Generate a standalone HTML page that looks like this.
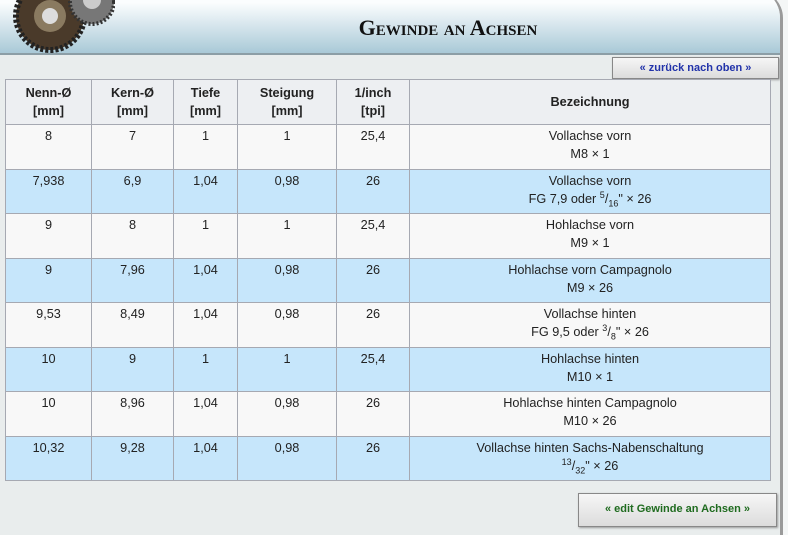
<!DOCTYPE html>
<html><head><meta charset="utf-8"><style>
*{margin:0;padding:0;box-sizing:border-box}
body{width:788px;height:526px;overflow:hidden;background:#f4f6f6;font-family:"Liberation Sans",Arial,sans-serif;font-size:12.7px;color:#222;position:relative}
#panel{position:absolute;left:-4px;top:-10px;width:787px;height:545px;background:#e9eded;border-right:3px solid #9a9a9a;border-top-right-radius:28px;overflow:hidden}
#hdr{position:absolute;left:0;top:0;width:100%;height:65px;background:linear-gradient(#fbfdfe 20%,#a9c9d7);border-bottom:2px solid #8c9ea6}
#title{position:absolute;left:0;width:100%;top:25px;text-align:center;font-family:"Liberation Serif",serif;font-size:22px;font-variant:small-caps;font-weight:bold;color:#111;padding-left:120px}
.btn{position:absolute;background:linear-gradient(#f6f6f6,#dcdcdc);border:1px solid #888;font-weight:bold;font-size:11px;text-align:center;box-shadow:1px 1px 2px #999}
table{position:absolute;left:5px;top:79px;border-collapse:collapse;width:766px}
td,th{border:1px solid #a6a9b2;text-align:center;vertical-align:top;padding-top:2px;line-height:18px}
th{background:#edeff2;font-weight:bold;height:45px;vertical-align:middle;padding-top:0}
tr.w td{background:#f8f8f8}
tr.b td{background:#c6e6fb}
td{height:44.5px}
sup,sub{font-size:9px;line-height:0}
</style></head><body>
<div id="panel">
<div id="hdr">
<svg width="115" height="62" style="position:absolute;left:4px;top:4px"><circle cx="50" cy="22" r="34" fill="#4a3a2a" stroke="#222" stroke-width="6" stroke-dasharray="3 2"/><circle cx="50" cy="22" r="16" fill="#8a7a60"/><circle cx="50" cy="22" r="8" fill="#ddd"/><circle cx="92" cy="8" r="22" fill="#777" stroke="#333" stroke-width="4" stroke-dasharray="2 2"/><circle cx="92" cy="6" r="9" fill="#ccc"/></svg>
<div id="title">Gewinde an Achsen</div>
</div>
</div>
<div class="btn" style="left:612px;top:57px;width:167px;height:22px;line-height:20px;color:#2233aa">« zurück nach oben »</div>
<table>
<tr><th style="width:86px">Nenn-Ø<br>[mm]</th><th style="width:82px">Kern-Ø<br>[mm]</th><th style="width:64px">Tiefe<br>[mm]</th><th style="width:99px">Steigung<br>[mm]</th><th style="width:73px">1/inch<br>[tpi]</th><th>Bezeichnung</th></tr>
<tr class="w"><td>8</td><td>7</td><td>1</td><td>1</td><td>25,4</td><td>Vollachse vorn<br>M8 × 1</td></tr>
<tr class="b"><td>7,938</td><td>6,9</td><td>1,04</td><td>0,98</td><td>26</td><td>Vollachse vorn<br>FG 7,9 oder <sup>5</sup>/<sub>16</sub>" × 26</td></tr>
<tr class="w"><td>9</td><td>8</td><td>1</td><td>1</td><td>25,4</td><td>Hohlachse vorn<br>M9 × 1</td></tr>
<tr class="b"><td>9</td><td>7,96</td><td>1,04</td><td>0,98</td><td>26</td><td>Hohlachse vorn Campagnolo<br>M9 × 26</td></tr>
<tr class="w"><td>9,53</td><td>8,49</td><td>1,04</td><td>0,98</td><td>26</td><td>Vollachse hinten<br>FG 9,5 oder <sup>3</sup>/<sub>8</sub>" × 26</td></tr>
<tr class="b"><td>10</td><td>9</td><td>1</td><td>1</td><td>25,4</td><td>Hohlachse hinten<br>M10 × 1</td></tr>
<tr class="w"><td>10</td><td>8,96</td><td>1,04</td><td>0,98</td><td>26</td><td>Hohlachse hinten Campagnolo<br>M10 × 26</td></tr>
<tr class="b"><td>10,32</td><td>9,28</td><td>1,04</td><td>0,98</td><td>26</td><td>Vollachse hinten Sachs-Nabenschaltung<br><sup>13</sup>/<sub>32</sub>" × 26</td></tr>
</table>
<div class="btn" style="left:578px;top:493px;width:199px;height:34px;line-height:30px;color:#1f6b1f">« edit Gewinde an Achsen »</div>
</body></html>
